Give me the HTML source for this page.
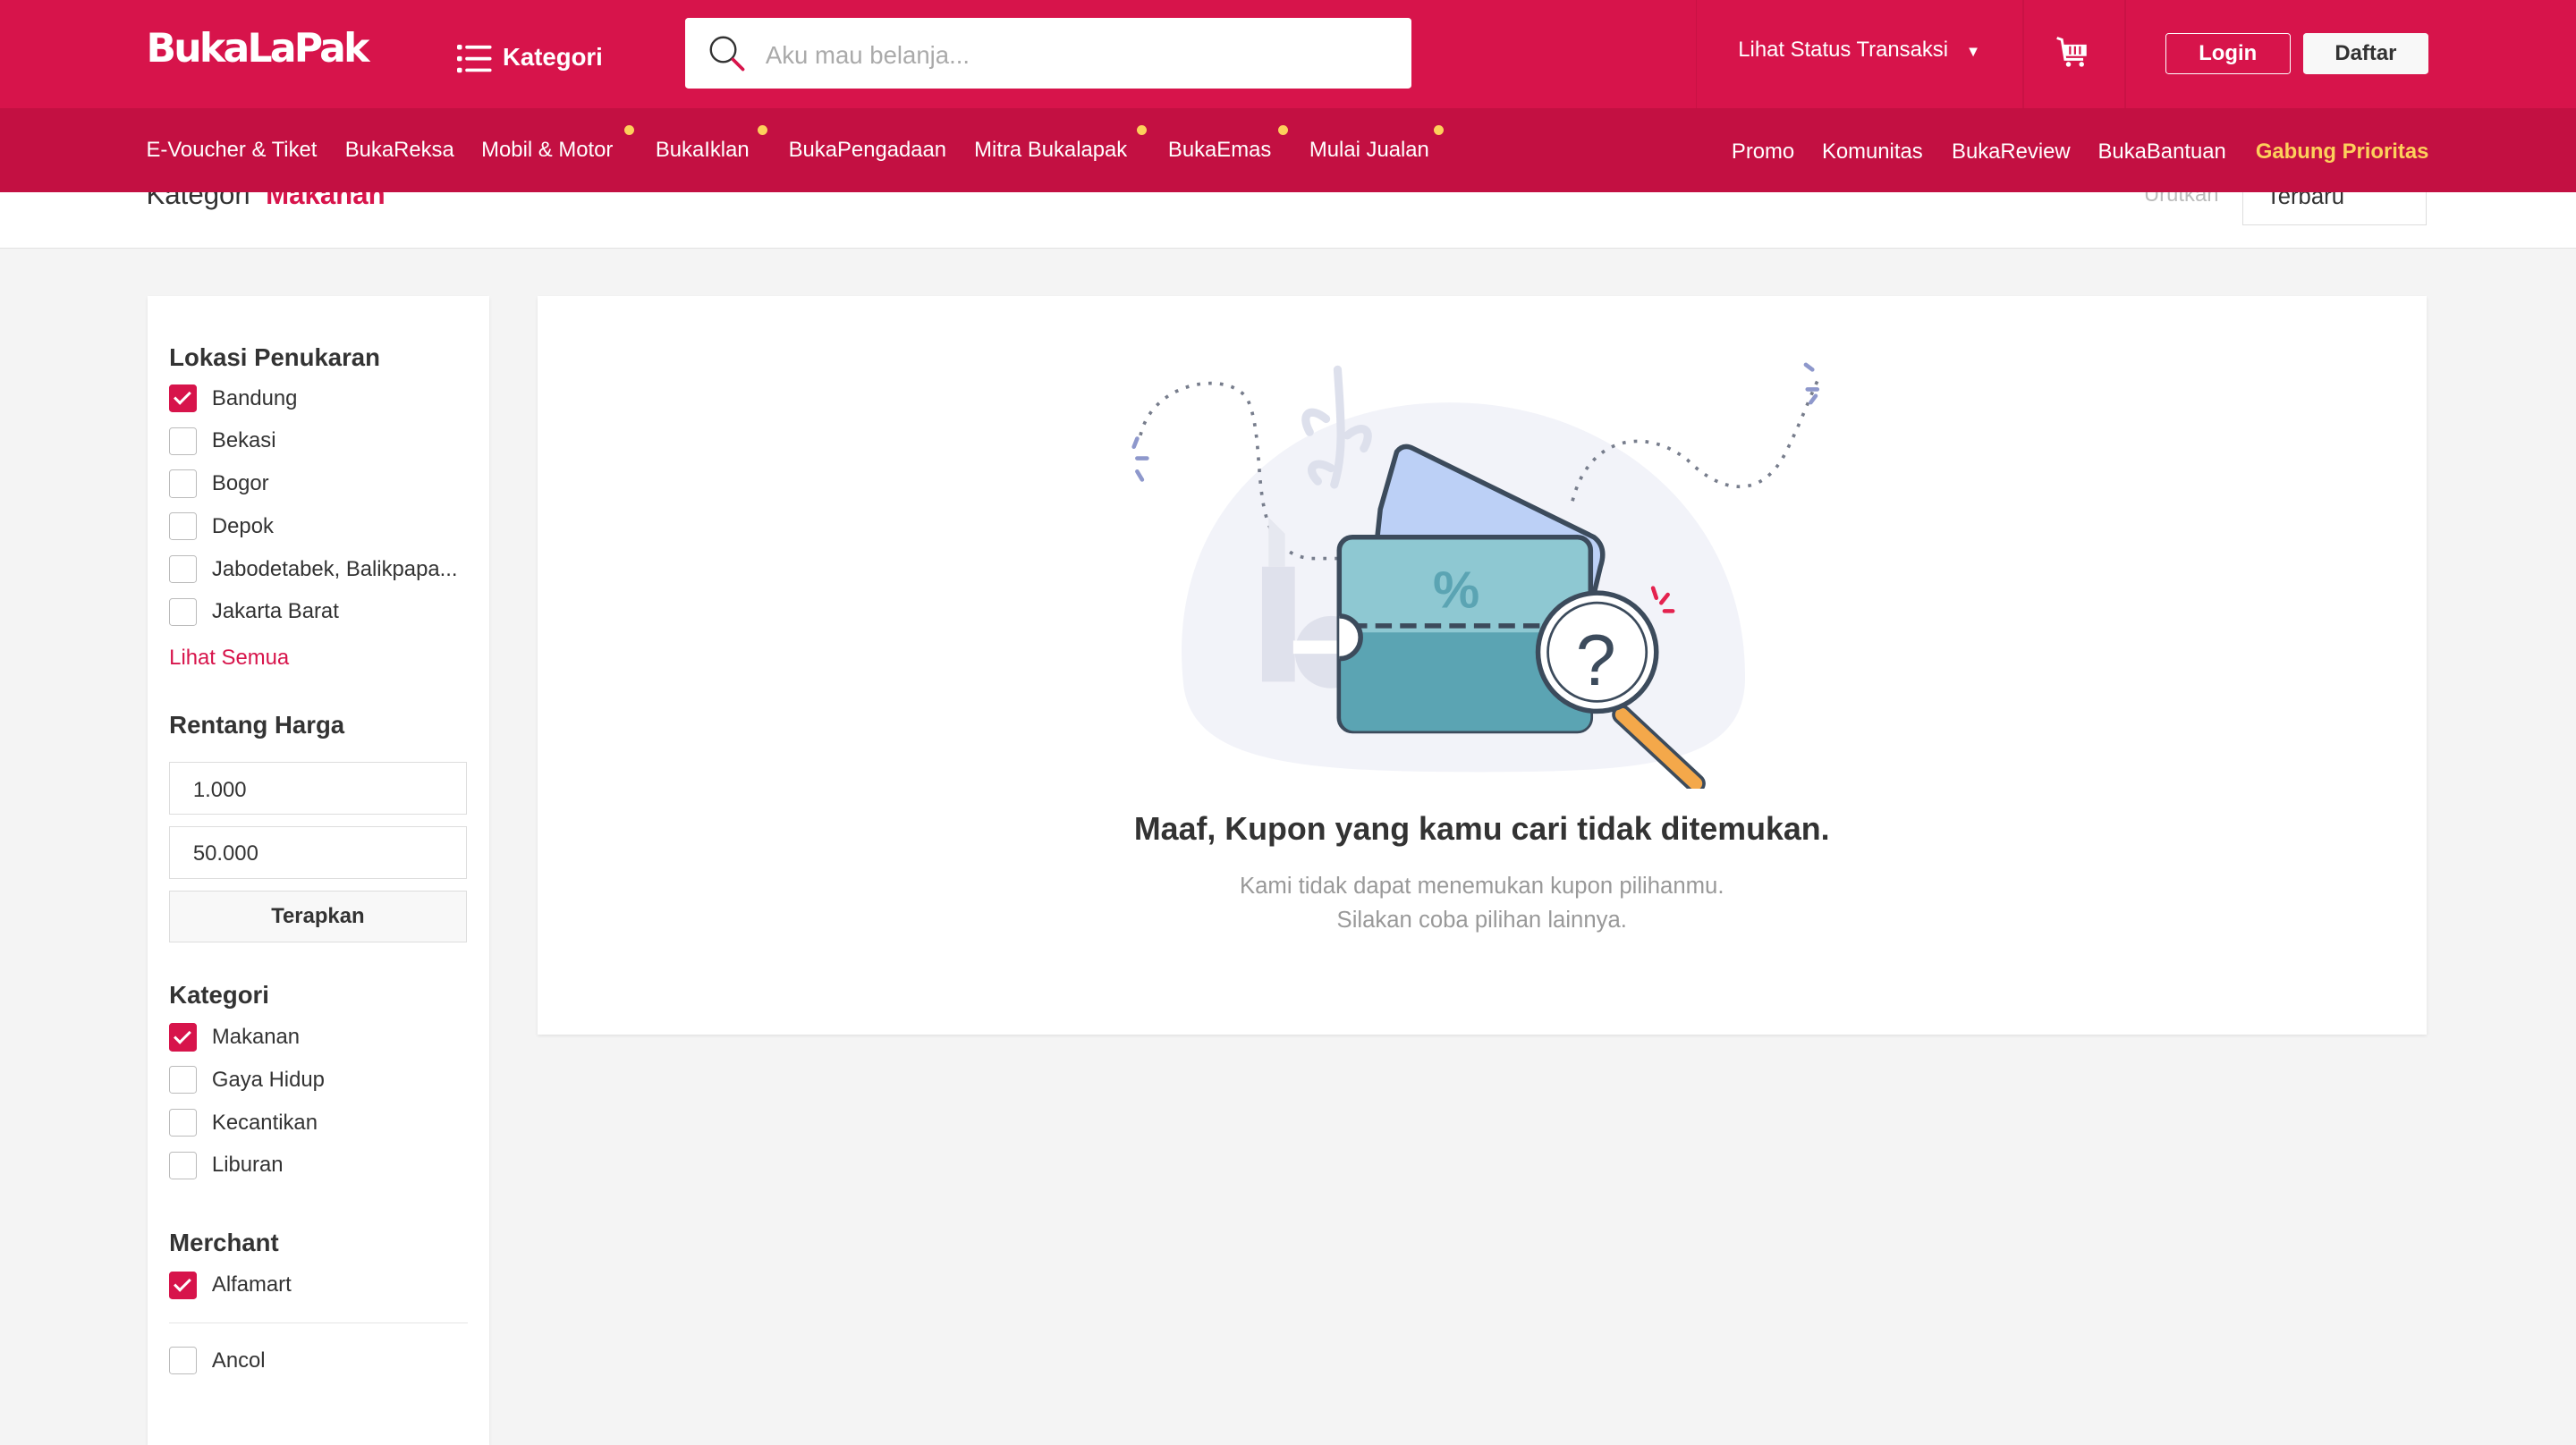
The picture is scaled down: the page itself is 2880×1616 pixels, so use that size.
<!DOCTYPE html>
<html><head><meta charset="utf-8"><style>
html{zoom:1.83674}
body{margin:0;width:1568px;height:846px;overflow:hidden;background:#f4f4f4;font-family:"Liberation Sans",sans-serif;position:relative;color:#333}
.a{position:absolute;white-space:nowrap}
.top{position:absolute;left:0;top:0;width:1568px;height:66px;background:#d7144b}
.sub{position:absolute;left:0;top:66px;width:1568px;height:51px;background:#c31042}
.sub span{position:absolute;top:18px;color:#fff;font-size:13px}
.dot{position:absolute;width:6px;height:6px;border-radius:3px;background:#fdd05b}
.strip{position:absolute;left:0;top:117px;width:1568px;height:34px;background:#fff;border-bottom:1px solid #e2e2e2;overflow:hidden}
.card{position:absolute;background:#fff;box-shadow:0 1px 2px rgba(0,0,0,.08)}
.h{position:absolute;font-weight:bold;font-size:15px;color:#333;left:13px}
.cb{position:absolute;left:13px;width:17px;height:17px;border:1px solid #bbb;border-radius:2px;box-sizing:border-box}
.cb.on{background:#d7144b;border-color:#d7144b}
.cb.on:after{content:"";position:absolute;left:5px;top:2px;width:4px;height:8px;border:solid #fff;border-width:0 2px 2px 0;transform:rotate(45deg)}
.lb{position:absolute;left:39px;font-size:13px;color:#333}
.inp{position:absolute;left:13px;width:181px;height:32px;border:1px solid #ddd;box-sizing:border-box;font-size:13px;padding:9px 14px}
</style></head><body>
<div class="top">
 <div class="a" style="left:89px;top:16px;color:#fff;font-weight:bold;font-size:24px;letter-spacing:-1.5px;font-family:'DejaVu Sans','Liberation Sans',sans-serif">BukaLaPak</div>
 <svg class="a" style="left:278px;top:27px" width="22" height="18" viewBox="0 0 22 18"><g fill="#fff"><rect x="0" y="0" width="3" height="3" rx="1"/><rect x="0" y="7" width="3" height="3" rx="1"/><rect x="0" y="14" width="3" height="3" rx="1"/><rect x="5" y="0.5" width="16" height="2" rx="1"/><rect x="5" y="7.5" width="16" height="2" rx="1"/><rect x="5" y="14.5" width="16" height="2" rx="1"/></g></svg>
 <div class="a" style="left:306px;top:26px;color:#fff;font-weight:bold;font-size:15px">Kategori</div>
 <div class="a" style="left:417px;top:11px;width:442px;height:43px;background:#fff;border-radius:2px"></div>
 <svg class="a" style="left:431px;top:21px" width="26" height="26" viewBox="0 0 26 26"><circle cx="9" cy="9" r="7.5" fill="none" stroke="#333" stroke-width="1.3"/><path d="M15 15l6 6" stroke="#d7144b" stroke-width="2" stroke-linecap="round"/></svg>
 <div class="a" style="left:466px;top:25px;color:#aaa;font-size:15px">Aku mau belanja...</div>
 <div class="a" style="left:1032px;top:0;width:1px;height:66px;background:#c91245"></div>
 <div class="a" style="left:1231px;top:0;width:1px;height:66px;background:#c91245"></div>
 <div class="a" style="left:1293px;top:0;width:1px;height:66px;background:#c91245"></div>
 <div class="a" style="left:1058px;top:23px;color:#fff;font-size:13px">Lihat Status Transaksi &nbsp; <span style="font-size:9px">▼</span></div>
 <svg class="a" style="left:1250px;top:20px" width="24" height="24" viewBox="0 0 24 24"><path d="M2 3l3 1 2 12h11" fill="none" stroke="#fff" stroke-width="1.6"/><rect x="6" y="7" width="14" height="7" fill="#fff"/><path d="M10 8v5M13 8v5M16 8v5" stroke="#d7144b" stroke-width="1.2"/><circle cx="9" cy="19" r="1.5" fill="#fff"/><circle cx="17" cy="19" r="1.5" fill="#fff"/></svg>
 <div class="a" style="left:1318px;top:20px;width:75px;height:24px;border:1px solid #fff;border-radius:2px;color:#fff;font-weight:bold;font-size:13px;text-align:center;line-height:24px">Login</div>
 <div class="a" style="left:1402px;top:20px;width:76px;height:25px;background:#f8f8f8;border-radius:2px;color:#333;font-weight:bold;font-size:13px;text-align:center;line-height:25px">Daftar</div>
</div>
<div class="sub">
 <span style="left:89px">E-Voucher &amp; Tiket</span><span style="left:210px">BukaReksa</span><span style="left:293px">Mobil &amp; Motor</span><span style="left:399px">BukaIklan</span><span style="left:480px">BukaPengadaan</span><span style="left:593px">Mitra Bukalapak</span><span style="left:711px">BukaEmas</span><span style="left:797px">Mulai Jualan</span>
 <i class="dot" style="left:380px;top:10px"></i><i class="dot" style="left:461px;top:10px"></i><i class="dot" style="left:692px;top:10px"></i><i class="dot" style="left:778px;top:10px"></i><i class="dot" style="left:873px;top:10px"></i>
 <span style="left:1054px;top:19px">Promo</span><span style="left:1109px;top:19px">Komunitas</span><span style="left:1188px;top:19px">BukaReview</span><span style="left:1277px;top:19px">BukaBantuan</span><span style="left:1373px;top:19px;color:#fdd05b;font-weight:bold">Gabung Prioritas</span>
</div>
<div class="strip">
 <div class="a" style="left:89px;top:-8px;font-size:17px;color:#333">Kategori &nbsp;<b style="color:#d7144b">Makanan</b></div>
 <div class="a" style="left:1305px;top:-6px;font-size:13px;color:#bbb">Urutkan</div>
 <div class="a" style="left:1365px;top:-6px;width:112px;height:26px;border:1px solid #ddd;border-top:0;font-size:14px;padding-left:14px;box-sizing:border-box;line-height:18px">Terbaru</div>
</div>
<div class="card" style="left:90px;top:180px;width:208px;height:700px">
 <div class="h" style="top:29px">Lokasi Penukaran</div>
 <div class="cb on" style="top:54px"></div><div class="lb" style="top:55px">Bandung</div>
 <div class="cb" style="top:80px"></div><div class="lb" style="top:81px">Bekasi</div>
 <div class="cb" style="top:106px"></div><div class="lb" style="top:107px">Bogor</div>
 <div class="cb" style="top:132px"></div><div class="lb" style="top:133px">Depok</div>
 <div class="cb" style="top:158px"></div><div class="lb" style="top:159px">Jabodetabek, Balikpapa...</div>
 <div class="cb" style="top:184px"></div><div class="lb" style="top:185px">Jakarta Barat</div>
 <div class="lb" style="left:13px;top:213px;color:#d7144b">Lihat Semua</div>
 <div class="h" style="top:253px">Rentang Harga</div>
 <div class="inp" style="top:284px">1.000</div>
 <div class="inp" style="top:323px">50.000</div>
 <div class="inp" style="top:362px;background:#f8f8f8;text-align:center;font-weight:bold;padding:8px 0">Terapkan</div>
 <div class="h" style="top:417px">Kategori</div>
 <div class="cb on" style="top:443px"></div><div class="lb" style="top:444px">Makanan</div>
 <div class="cb" style="top:469px"></div><div class="lb" style="top:470px">Gaya Hidup</div>
 <div class="cb" style="top:495px"></div><div class="lb" style="top:496px">Kecantikan</div>
 <div class="cb" style="top:521px"></div><div class="lb" style="top:522px">Liburan</div>
 <div class="h" style="top:568px">Merchant</div>
 <div class="cb on" style="top:594px"></div><div class="lb" style="top:595px">Alfamart</div>
 <div class="a" style="left:13px;top:625px;width:182px;height:1px;background:#e5e5e5"></div>
 <div class="cb" style="top:640px"></div><div class="lb" style="top:641px">Ancol</div>
</div>
<div class="card" style="left:327px;top:180px;width:1150px;height:450px">
 <svg class="a" style="left:355px;top:35px" width="440" height="265" viewBox="0 0 440 265">
  <path d="M38 200 C28 100 100 30 200 30 C300 30 382 100 380 200 C378 250 320 255 220 255 C110 255 42 250 38 200Z" fill="#f2f3f9"/>
  <path d="M132 10 C134 40 136 60 130 80 M125 40 c-10 -8 -16 -3 -10 8 M138 50 c10 -8 16 -3 10 8 M128 70 c-10 -6 -16 0 -8 8" stroke="#dde0ec" stroke-width="5" fill="none" stroke-linecap="round"/>
  <path d="M12 50 C20 15 70 10 78 30 C90 60 75 120 115 125 L135 125" fill="none" stroke="#777d8c" stroke-width="2" stroke-dasharray="2 5"/>
  <path d="M10 52l-2 5 M10 64h6 M10 72l3 5" stroke="#8e98cc" stroke-width="2.5" stroke-linecap="round"/>
  <path d="M275 90 C285 50 320 45 345 65 C365 85 390 90 405 60 C415 40 420 25 425 15" fill="none" stroke="#777d8c" stroke-width="2" stroke-dasharray="2 5"/>
  <path d="M417 7l4 3 M418 22h6 M420 30l3 -4" stroke="#8e98cc" stroke-width="2.5" stroke-linecap="round"/>
  <rect x="86" y="130" width="20" height="70" fill="#dfe1ec"/><path d="M90 130v-30l10 10v20z" fill="#e6e8f0"/>
  <circle cx="128" cy="182" r="22" fill="#dfe1ec"/><rect x="105" y="175" width="40" height="8" fill="#fff"/>
  <path d="M158 95 L168 60 Q172 55 178 58 L288 112 Q296 118 292 130 L280 180 L150 170Z" fill="#bcd0f6" stroke="#3c4b5c" stroke-width="3" stroke-linejoin="round"/>
  <circle cx="213" cy="115" r="4" fill="#3c4b5c"/><path d="M218 125l12 -10" stroke="#3c4b5c" stroke-width="3"/>
  <rect x="133" y="112" width="153" height="118" rx="8" fill="#8ec8d2" stroke="#3c4b5c" stroke-width="3"/>
  <path d="M134 170 H286 V222 a8 8 0 0 1 -8 8 H142 a8 8 0 0 1 -8 -8Z" fill="#5ba4b3"/>
  <path d="M140 166 H280" stroke="#3c4b5c" stroke-width="3" stroke-dasharray="10 5"/>
  <path d="M133 160 a13 13 0 0 1 0 26" fill="#fff" stroke="#3c4b5c" stroke-width="3"/>
  <text x="190" y="155" font-size="32" font-family="Liberation Sans" font-weight="bold" fill="#5ba4b3">%</text>
  <path d="M305 220 L350 262" stroke="#3c4b5c" stroke-width="12" stroke-linecap="round"/>
  <path d="M305 220 L350 262" stroke="#f4a84a" stroke-width="8" stroke-linecap="round"/>
  <circle cx="290" cy="182" r="36" fill="#fff" stroke="#3c4b5c" stroke-width="3"/><circle cx="290" cy="182" r="30" fill="none" stroke="#3c4b5c" stroke-width="1.5"/>
  <text x="277" y="202" font-size="44" font-family="Liberation Sans" fill="#3c4b5c">?</text>
  <path d="M324 143l2 6 M333 147l-4 5 M336 157l-5 0" stroke="#e4224f" stroke-width="2.5" stroke-linecap="round"/>
 </svg>
 <div class="a" style="left:0;width:1150px;text-align:center;top:314px;font-size:19.5px;font-weight:bold;color:#333">Maaf, Kupon yang kamu cari tidak ditemukan.</div>
 <div class="a" style="left:0;width:1150px;text-align:center;top:349px;font-size:14px;color:#999;line-height:21px">Kami tidak dapat menemukan kupon pilihanmu.<br>Silakan coba pilihan lainnya.</div>
</div>
</body></html>
